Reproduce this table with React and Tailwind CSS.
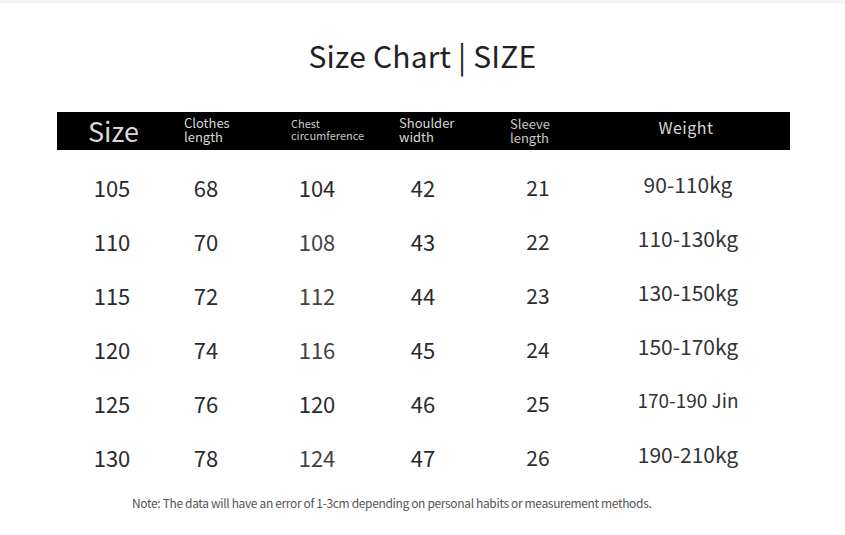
import React from 'react';

const rows = [
  ['105', '68', '104', '42', '21', '90-110kg'],
  ['110', '70', '108', '43', '22', '110-130kg'],
  ['115', '72', '112', '44', '23', '130-150kg'],
  ['120', '74', '116', '45', '24', '150-170kg'],
  ['125', '76', '120', '46', '25', '170-190 Jin'],
  ['130', '78', '124', '47', '26', '190-210kg'],
];

export default function App() {
  return (
    <div className="w-[845px] h-[535px] bg-white overflow-hidden font-['Noto_Sans_CJK_SC','Noto_Sans',sans-serif] text-[#2b2b2b]">
      <div className="h-[3px] bg-[#eef1f6]" />

      {/* Title */}
      <h1 className="mt-[34px] text-center text-[30px] leading-[36px] font-normal text-[#222] tracking-[0.2px]">
        Size Chart | SIZE
      </h1>

      <div className="ml-[57px] w-[733px] mt-[39px]">
        {/* Header bar */}
        <div className="h-[38px] bg-black flex items-center text-[#d8d8d8]">
          <div className="w-[127px] pl-[31px] text-[27px] leading-none pb-[2px]">Size</div>
          <div className="w-[107px] text-[13px] leading-[14px] pb-[3px]">Clothes<br />length</div>
          <div className="w-[108px] text-[11px] leading-[12px] pb-[5px] text-[#c8c8c8]">Chest<br />circumference</div>
          <div className="w-[111px] text-[13px] leading-[14px] pb-[3px]">Shoulder<br />width</div>
          <div className="w-[119px] text-[13px] leading-[14px] pb-[1px] text-[#c8c8c8]">Sleeve<br />length</div>
          <div className="w-[114px] text-center text-[16px] leading-none pb-[8px] tracking-[0.5px]">Weight</div>
        </div>

        {/* Body */}
        <div className="pt-[10px]">
          {rows.map((r, i) => (
            <div key={i} className="grid grid-cols-[110px_78px_144px_68px_162px_138px] h-[54px] items-center text-center text-[22px] leading-none">
              <div>{r[0]}</div>
              <div>{r[1]}</div>
              <div className={i % 4 === 0 ? 'text-[#2b2b2b]' : 'text-[#444]'}>{r[2]}</div>
              <div>{r[3]}</div>
              <div className="text-[21px]">{r[4]}</div>
              <div className={(i === 4 ? 'text-[19px] pb-[8px]' : 'text-[21px] pb-[6px]') + ' text-[#333]'}>{r[5]}</div>
            </div>
          ))}
        </div>
      </div>

      <p className="ml-[132px] mt-[13px] text-[12px] leading-none text-[#555] tracking-[-0.35px]">
        Note: The data will have an error of 1-3cm depending on personal habits or measurement methods.
      </p>
    </div>
  );
}
